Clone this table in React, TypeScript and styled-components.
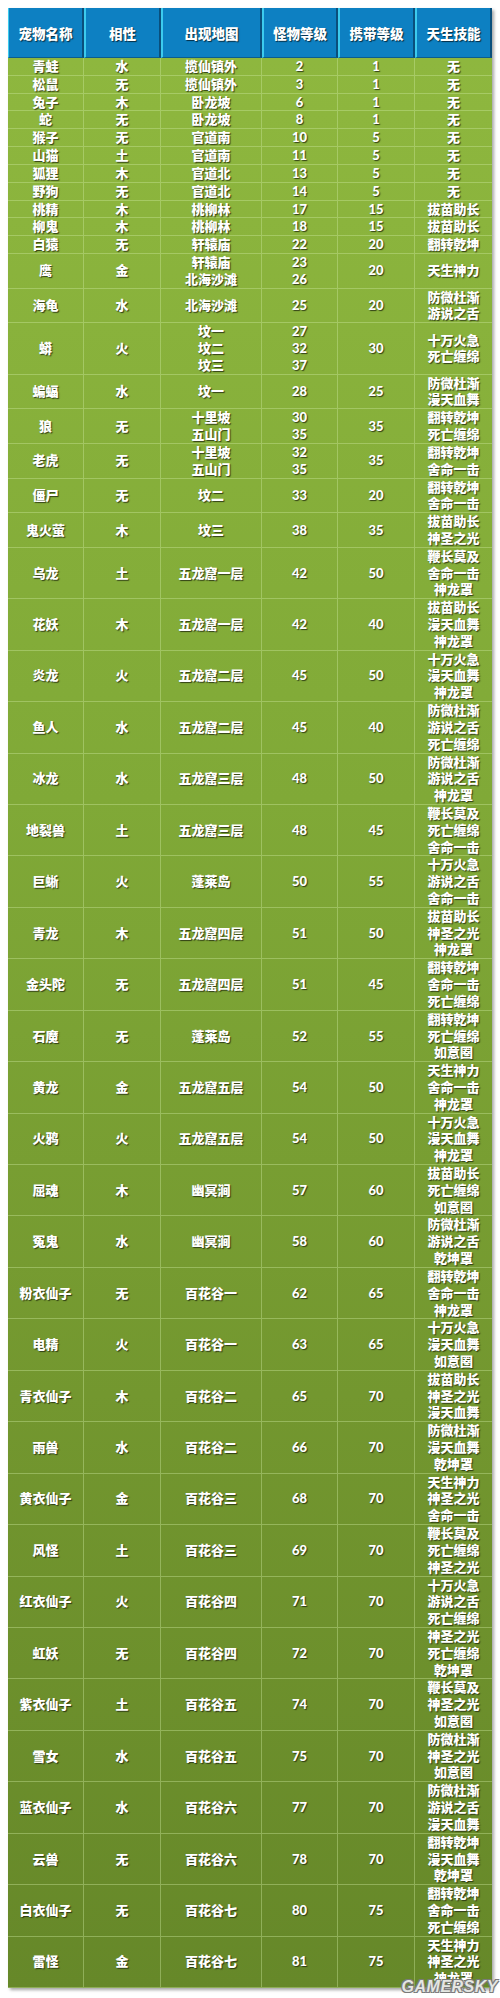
import React from "react";
import styled, { createGlobalStyle } from "styled-components";

const GlobalStyle = createGlobalStyle`
  html, body { margin: 0; padding: 0; background: #ffffff; }
  body { padding: 8px; font-family: Lato, "Noto Sans CJK SC", sans-serif; }
`;

type Row = [string, string, string | string[], string | string[], string, string | string[]];

const rows: Row[] = [
  ["青蛙", "水", "揽仙镇外", "2", "1", "无"],
  ["松鼠", "无", "揽仙镇外", "3", "1", "无"],
  ["兔子", "木", "卧龙坡", "6", "1", "无"],
  ["蛇", "无", "卧龙坡", "8", "1", "无"],
  ["猴子", "无", "官道南", "10", "5", "无"],
  ["山猫", "土", "官道南", "11", "5", "无"],
  ["狐狸", "木", "官道北", "13", "5", "无"],
  ["野狗", "无", "官道北", "14", "5", "无"],
  ["桃精", "木", "桃柳林", "17", "15", "拔苗助长"],
  ["柳鬼", "木", "桃柳林", "18", "15", "拔苗助长"],
  ["白猿", "无", "轩辕庙", "22", "20", "翻转乾坤"],
  ["鹰", "金", ["轩辕庙", "北海沙滩"], ["23", "26"], "20", "天生神力"],
  ["海龟", "水", "北海沙滩", "25", "20", ["防微杜渐", "游说之舌"]],
  ["蟒", "火", ["坟一", "坟二", "坟三"], ["27", "32", "37"], "30", ["十万火急", "死亡缠绵"]],
  ["蝙蝠", "水", "坟一", "28", "25", ["防微杜渐", "漫天血舞"]],
  ["狼", "无", ["十里坡", "五山门"], ["30", "35"], "35", ["翻转乾坤", "死亡缠绵"]],
  ["老虎", "无", ["十里坡", "五山门"], ["32", "35"], "35", ["翻转乾坤", "舍命一击"]],
  ["僵尸", "无", "坟二", "33", "20", ["翻转乾坤", "舍命一击"]],
  ["鬼火萤", "木", "坟三", "38", "35", ["拔苗助长", "神圣之光"]],
  ["乌龙", "土", "五龙窟一层", "42", "50", ["鞭长莫及", "舍命一击", "神龙罩"]],
  ["花妖", "木", "五龙窟一层", "42", "40", ["拔苗助长", "漫天血舞", "神龙罩"]],
  ["炎龙", "火", "五龙窟二层", "45", "50", ["十万火急", "漫天血舞", "神龙罩"]],
  ["鱼人", "水", "五龙窟二层", "45", "40", ["防微杜渐", "游说之舌", "死亡缠绵"]],
  ["冰龙", "水", "五龙窟三层", "48", "50", ["防微杜渐", "游说之舌", "神龙罩"]],
  ["地裂兽", "土", "五龙窟三层", "48", "45", ["鞭长莫及", "死亡缠绵", "舍命一击"]],
  ["巨蜥", "火", "蓬莱岛", "50", "55", ["十万火急", "游说之舌", "舍命一击"]],
  ["青龙", "木", "五龙窟四层", "51", "50", ["拔苗助长", "神圣之光", "神龙罩"]],
  ["金头陀", "无", "五龙窟四层", "51", "45", ["翻转乾坤", "舍命一击", "死亡缠绵"]],
  ["石魔", "无", "蓬莱岛", "52", "55", ["翻转乾坤", "死亡缠绵", "如意圈"]],
  ["黄龙", "金", "五龙窟五层", "54", "50", ["天生神力", "舍命一击", "神龙罩"]],
  ["火鸦", "火", "五龙窟五层", "54", "50", ["十万火急", "漫天血舞", "神龙罩"]],
  ["屈魂", "木", "幽冥涧", "57", "60", ["拔苗助长", "死亡缠绵", "如意圈"]],
  ["冤鬼", "水", "幽冥涧", "58", "60", ["防微杜渐", "游说之舌", "乾坤罩"]],
  ["粉衣仙子", "无", "百花谷一", "62", "65", ["翻转乾坤", "舍命一击", "神龙罩"]],
  ["电精", "火", "百花谷一", "63", "65", ["十万火急", "漫天血舞", "如意圈"]],
  ["青衣仙子", "木", "百花谷二", "65", "70", ["拔苗助长", "神圣之光", "漫天血舞"]],
  ["雨兽", "水", "百花谷二", "66", "70", ["防微杜渐", "漫天血舞", "乾坤罩"]],
  ["黄衣仙子", "金", "百花谷三", "68", "70", ["天生神力", "神圣之光", "舍命一击"]],
  ["风怪", "土", "百花谷三", "69", "70", ["鞭长莫及", "死亡缠绵", "神圣之光"]],
  ["红衣仙子", "火", "百花谷四", "71", "70", ["十万火急", "游说之舌", "死亡缠绵"]],
  ["虹妖", "无", "百花谷四", "72", "70", ["神圣之光", "死亡缠绵", "乾坤罩"]],
  ["紫衣仙子", "土", "百花谷五", "74", "70", ["鞭长莫及", "神圣之光", "如意圈"]],
  ["雪女", "水", "百花谷五", "75", "70", ["防微杜渐", "神圣之光", "如意圈"]],
  ["蓝衣仙子", "水", "百花谷六", "77", "70", ["防微杜渐", "游说之舌", "漫天血舞"]],
  ["云兽", "无", "百花谷六", "78", "70", ["翻转乾坤", "漫天血舞", "乾坤罩"]],
  ["白衣仙子", "无", "百花谷七", "80", "75", ["翻转乾坤", "舍命一击", "死亡缠绵"]],
  ["雷怪", "金", "百花谷七", "81", "75", ["天生神力", "神圣之光", "神龙罩"]],
];

const headers = ["宠物名称", "相性", "出现地图", "怪物等级", "携带等级", "天生技能"];

const Wrap = styled.div`
  position: relative;
  width: 484px;
`;

const Grid = styled.div`
  display: grid;
  grid-template-columns: 76px 77px 101px 76px 77px 77px;
  width: 484px;
  background: linear-gradient(180deg, #8fb83f 0%, #80a937 40%, #73972f 70%, #668829 100%);
  box-shadow: 2px 2px 3px rgba(0, 0, 0, 0.35);
`;

const HeadCell = styled.div`
  height: 50px;
  box-sizing: border-box;
  display: flex;
  align-items: center;
  justify-content: center;
  background: #0d80c2;
  border-left: 2px solid #3ccbee;
  border-right: 2px solid #0a4f7c;
  border-bottom: 1px solid #0a5d8f;
  color: #ffffff;
  font-weight: 900;
  font-size: 13.5px;
  text-shadow: 1px 1px 1px rgba(0, 0, 0, 0.65);
  &:first-child { border-left-width: 1px; }
`;

const Cell = styled.div`
  box-sizing: border-box;
  display: flex;
  flex-direction: column;
  align-items: center;
  justify-content: center;
  border-right: 1px solid rgba(205, 232, 160, 0.4);
  border-bottom: 1px solid rgba(205, 232, 160, 0.4);
  color: #ffffff;
  font-weight: 900;
  font-size: 13px;
  line-height: 16.82px;
  text-shadow: 1px 1px 1px rgba(35, 45, 15, 0.85);
  white-space: nowrap;
  &:nth-child(6n) { border-right: none; }
`;

const Line = styled.span`
  display: block;
`;

const Watermark = styled.div`
  position: absolute;
  right: -6px;
  bottom: -8px;
  font-family: "Liberation Sans", Arial, sans-serif;
  font-style: italic;
  font-weight: 700;
  font-size: 16px;
  letter-spacing: 0.5px;
  color: #e4e6e2;
  text-shadow: -1px -1px 0 #7a7a7a, 1px -1px 0 #7a7a7a, -1px 1px 0 #7a7a7a, 1px 1px 0 #7a7a7a;
`;

const renderLines = (v: string | string[]) =>
  (Array.isArray(v) ? v : [v]).map((t, i) => <Line key={i}>{t}</Line>);

export default function App() {
  return (
    <>
      <GlobalStyle />
      <Wrap>
        <Grid>
          {headers.map((h) => (
            <HeadCell key={h}>{h}</HeadCell>
          ))}
          {rows.map((r, ri) =>
            r.map((c, ci) => <Cell key={`${ri}-${ci}`}>{renderLines(c)}</Cell>)
          )}
        </Grid>
        <Watermark>GAMERSKY</Watermark>
      </Wrap>
    </>
  );
}
